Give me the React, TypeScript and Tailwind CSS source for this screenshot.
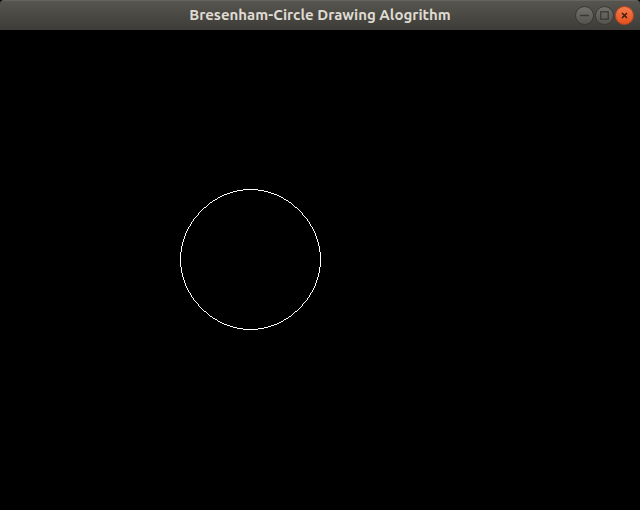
import React from 'react';

const CX = 250;
const CY = 229; // relative to the canvas below the 30px title bar
const R = 70;

function bresenhamPoints(xc: number, yc: number, r: number) {
    const pts: [number, number][] = [];
    let x = 0;
    let y = r;
    let d = 3 - 2 * r;
    const plot = (a: number, b: number) => {
        pts.push([xc + a, yc + b], [xc - a, yc + b], [xc + a, yc - b], [xc - a, yc - b]);
        pts.push([xc + b, yc + a], [xc - b, yc + a], [xc + b, yc - a], [xc - b, yc - a]);
    };
    plot(x, y);
    while (y >= x) {
        x++;
        if (d > 0) {
            y--;
            d = d + 4 * (x - y) + 10;
        } else {
            d = d + 4 * x + 6;
        }
        plot(x, y);
    }
    return pts;
}

function WinButton({ kind }: { kind: 'min' | 'max' | 'close' }) {
    const isClose = kind === 'close';
    return (
        <div
            className={
                'flex h-[19px] w-[19px] items-center justify-center rounded-full border ' +
                (isClose
                    ? 'border-[#c3441c] bg-[linear-gradient(#f47a4c,#e3521e)]'
                    : 'border-[#3a3935] bg-[linear-gradient(#72706a,#56544f)]')
            }
        >
            <svg width="11" height="11" viewBox="0 0 11 11">
                {kind === 'min' && <line x1="1" y1="5.5" x2="10" y2="5.5" stroke="#3a3935" strokeWidth="1.5" />}
                {kind === 'max' && <rect x="1.8" y="1.8" width="7.4" height="7.4" fill="none" stroke="#3a3935" strokeWidth="1.3" />}
                {kind === 'close' && (
                    <path d="M3 3 L8 8 M8 3 L3 8" stroke="#3b1a0c" strokeWidth="1.4" />
                )}
            </svg>
        </div>
    );
}

export default function App() {
    const pts = bresenhamPoints(CX, CY, R);
    return (
        <div className="flex h-[510px] w-[640px] flex-col overflow-hidden bg-black">
            <div className="relative flex h-[30px] shrink-0 items-center justify-center rounded-t-[4px] border-t border-[#66645e] bg-[linear-gradient(#57554f,#3d3c38)]">
                <span className="font-['Ubuntu','DejaVu_Sans',sans-serif] text-[15px] font-bold text-[#dfdbd2]">
                    Bresenham-Circle Drawing Alogrithm
                </span>
                <div className="absolute right-[6px] top-[5px] flex gap-px">
                    <WinButton kind="min" />
                    <WinButton kind="max" />
                    <WinButton kind="close" />
                </div>
            </div>
            <svg width="640" height="480" className="block" shapeRendering="crispEdges">
                {pts.map(([x, y], i) => (
                    <rect key={i} x={x} y={y} width="1" height="1" fill="#ffffff" />
                ))}
            </svg>
        </div>
    );
}
